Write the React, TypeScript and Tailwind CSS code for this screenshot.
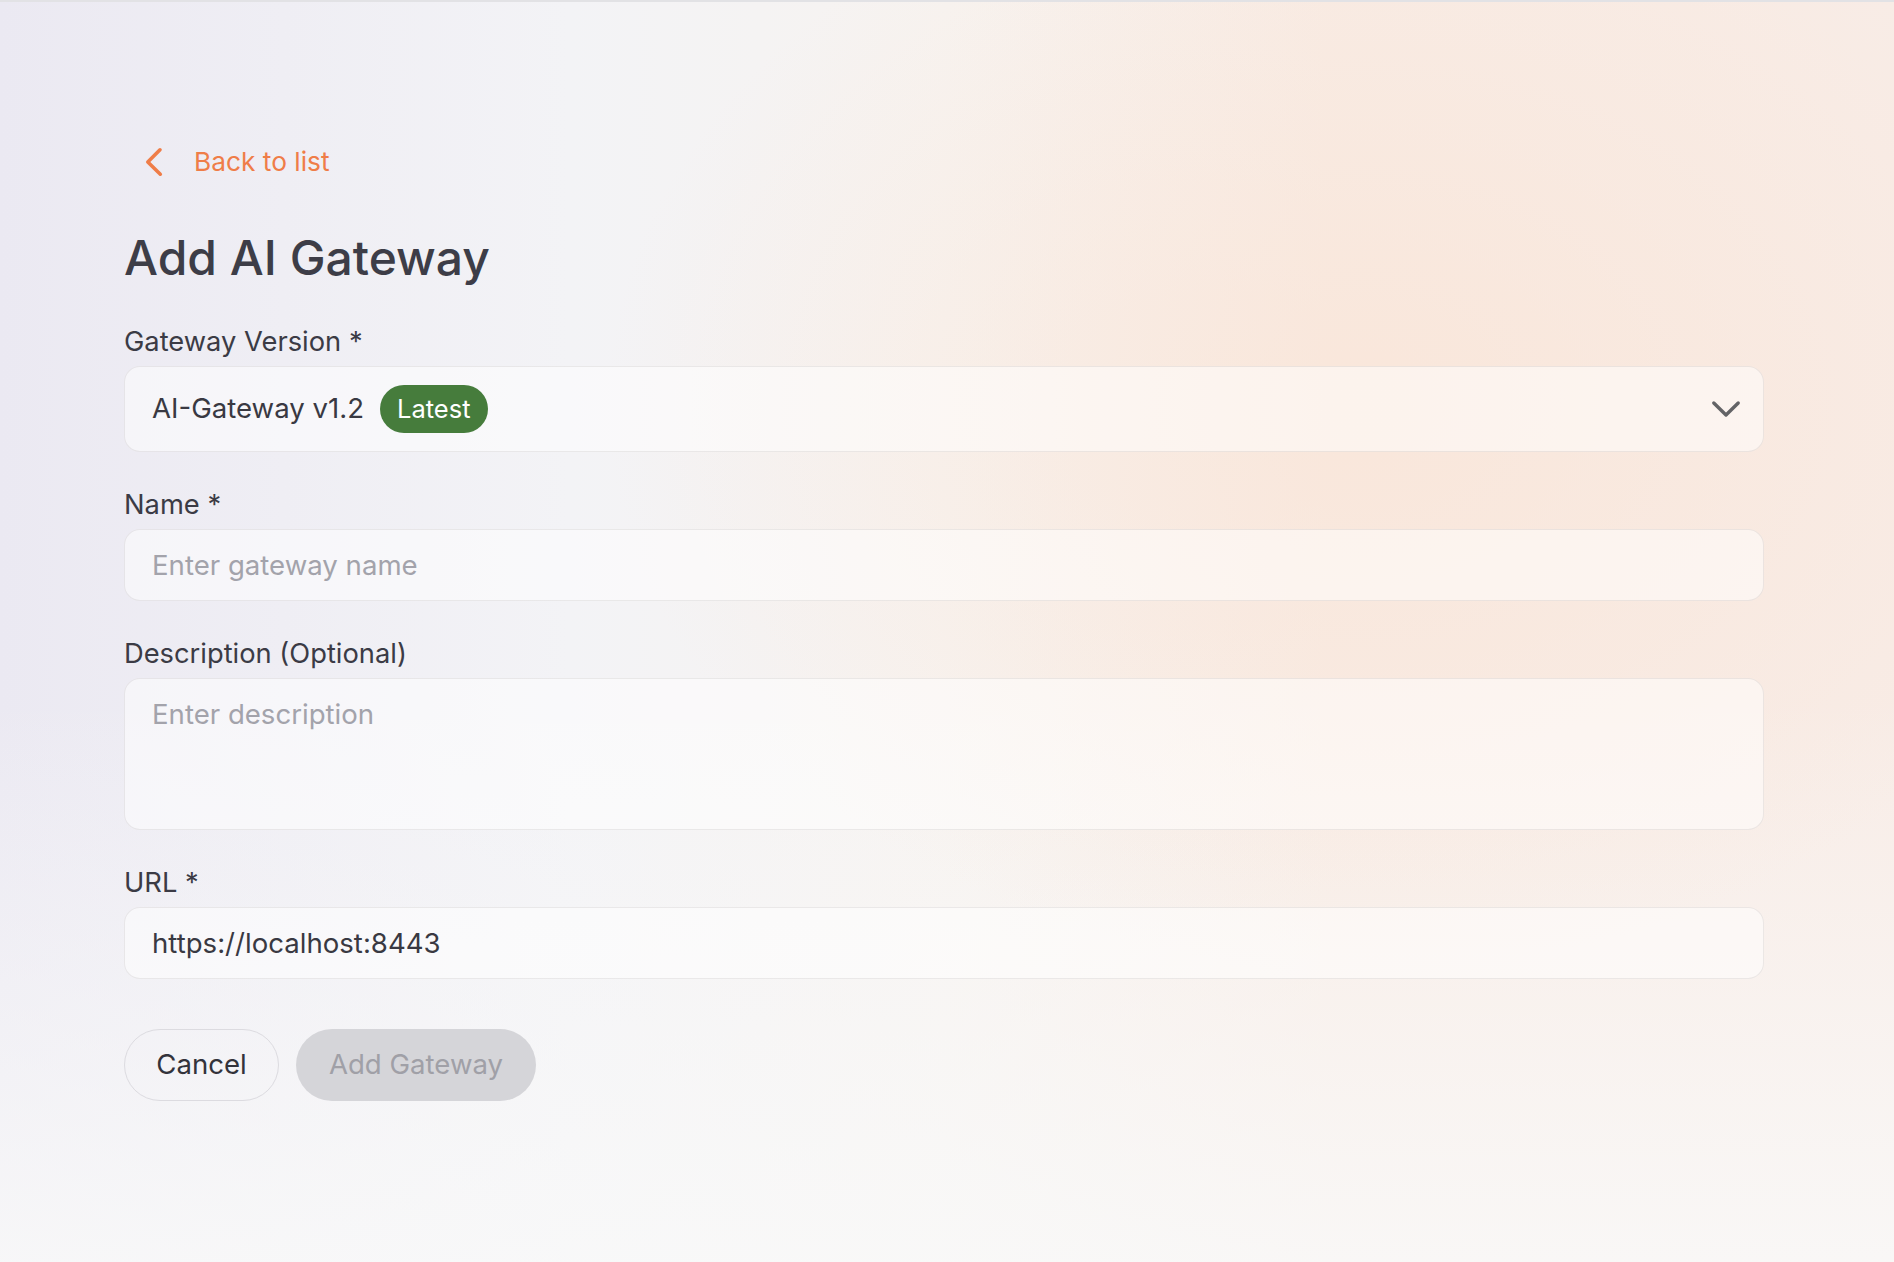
import { useState } from 'react';

const labelClass = 'block h-[32px] leading-[32px] text-[27.3px] text-[#3b3b45] mb-[8px]';
const inputClass =
  'w-full rounded-[16px] border-[1.5px] border-[rgba(40,30,30,0.08)] bg-white/50 px-[27px] text-[27.6px] text-[#393942] placeholder:text-[#a3a3ab] outline-none';

const BackChevron = () => (
  <svg width="20" height="30" viewBox="0 0 20 30" fill="none" className="ml-[20px] mr-[30px]">
    <path d="M16 2.8 L3.8 15 L16.3 27.2" stroke="#ef7d48" strokeWidth="3.6" strokeLinecap="round" strokeLinejoin="round" />
  </svg>
);

const SelectChevron = () => (
  <svg width="30" height="18" viewBox="0 0 30 18" fill="none">
    <path d="M2.8 3 L15 15 L27.2 3" stroke="#636366" strokeWidth="3.4" strokeLinecap="round" strokeLinejoin="round" />
  </svg>
);

const AddGateway = () => {
  const [name, setName] = useState('');
  const [description, setDescription] = useState('');
  const [url, setUrl] = useState('https://localhost:8443');

  return (
    <div className="min-h-screen w-full border-t-2 border-[#e2e2e5] bg-[radial-gradient(ellipse_40%_45%_at_72%_32%,rgba(250,226,210,0.55),transparent),linear-gradient(180deg,transparent_55%,rgba(249,249,249,0.85)_100%),linear-gradient(90deg,#ebe9f2_0%,#f3f3f6_30%,#f7f3f0_50%,#f8ece5_70%,#f8ece6_100%)] font-['Inter',sans-serif]">
      <div className="pl-[124px] pr-[130px] pt-[144px] pb-[160px]">
        <a href="#" className="flex h-[32px] items-center text-[26.3px] text-[#ef7d48]">
          <BackChevron />
          Back to list
        </a>

        <h1 className="mt-[56px] text-[48px] font-medium leading-none text-[#3d3d47]">Add AI Gateway</h1>

        <div className="mt-[44px] flex flex-col gap-[37px]">
          <div>
            <label className={labelClass}>Gateway Version *</label>
            <button className="flex h-[86px] w-full items-center justify-between rounded-[16px] border-[1.5px] border-[rgba(40,30,30,0.08)] bg-white/50 pl-[27px] pr-[22px]">
              <span className="flex items-center gap-[16px]">
                <span className="text-[27.6px] text-[#393942]">AI-Gateway v1.2</span>
                <span className="flex h-[48px] items-center rounded-full bg-[#467c3c] px-[17px] text-[25.5px] text-white">
                  Latest
                </span>
              </span>
              <SelectChevron />
            </button>
          </div>

          <div>
            <label className={labelClass}>Name *</label>
            <input
              value={name}
              onChange={e => setName(e.target.value)}
              placeholder="Enter gateway name"
              className={`${inputClass} h-[72px]`}
            />
          </div>

          <div>
            <label className={labelClass}>Description (Optional)</label>
            <textarea
              value={description}
              onChange={e => setDescription(e.target.value)}
              placeholder="Enter description"
              className={`${inputClass} block h-[152px] resize-none pt-[15px] leading-[40px]`}
            />
          </div>

          <div>
            <label className={labelClass}>URL *</label>
            <input value={url} onChange={e => setUrl(e.target.value)} className={`${inputClass} h-[72px]`} />
          </div>
        </div>

        <div className="mt-[50px] flex gap-[17px]">
          <button className="flex h-[72px] w-[155px] items-center justify-center rounded-full border-[1.5px] border-[#dcdbe0] text-[27.6px] text-[#33333b]">
            Cancel
          </button>
          <button
            disabled
            className="flex h-[72px] w-[240px] items-center justify-center rounded-full bg-[#d5d5d9] text-[27.6px] text-[#a0a0a7]"
          >
            Add Gateway
          </button>
        </div>
      </div>
    </div>
  );
};

export default AddGateway;
